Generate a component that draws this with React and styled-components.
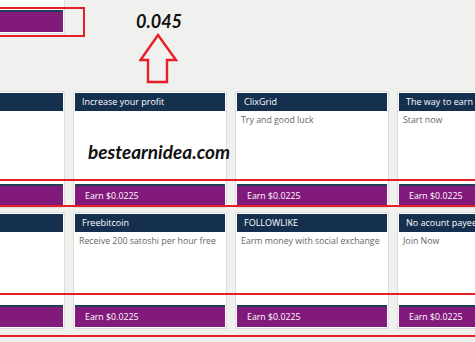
import React from 'react';
import styled, { createGlobalStyle } from 'styled-components';

const GlobalStyle = createGlobalStyle`
  html, body {
    margin: 0;
    padding: 0;
    background: #f0f0ee;
    overflow: hidden;
  }
  body {
    width: 475px;
    height: 342px;
    font-family: "Open Sans", "Noto Sans", sans-serif;
  }
`;

const rows = [
  [
    { title: 'Bitcoin investment', text: '' },
    { title: 'Increase your profit', text: '' },
    { title: 'ClixGrid', text: 'Try and good luck' },
    { title: 'The way to earn', text: 'Start now' },
  ],
  [
    { title: '', text: '' },
    { title: 'Freebitcoin', text: 'Receive 200 satoshi per hour free' },
    { title: 'FOLLOWLIKE', text: 'Earm money with social exchange' },
    { title: 'No acount payeer', text: 'Join Now' },
  ],
];

const Page = styled.div`
  width: 475px;
  height: 342px;
  overflow: hidden;
  position: relative;
`;

const Top = styled.div`
  display: grid;
  grid-template-columns: 154px 154px;
  column-gap: 8px;
  margin-left: -89px;
  height: 91px;
`;

const Stub = styled.div`
  height: 32px;
  background: #fff;
  border: 1px solid #dcdcdc;
  border-top: none;
  padding: 0 1px 1px;
  display: flex;
  flex-direction: column;
  justify-content: flex-end;
`;

const Score = styled.div`
  display: flex;
  flex-direction: column;
  align-items: center;
  gap: 2px;
  padding-top: 11px;
  width: 60px;
  margin-left: 56px;
`;

const Amount = styled.div`
  font-family: Lato, "Liberation Sans", sans-serif;
  font-weight: 700;
  font-style: italic;
  font-size: 18px;
  line-height: 20px;
  color: #111;
`;

const Grid = styled.div`
  display: grid;
  grid-template-columns: repeat(4, 154px);
  column-gap: 8px;
  margin-left: -89px;
`;

const Row = styled.div`
  display: contents;
`;

const Card = styled.div`
  height: 117px;
  margin-bottom: 4px;
  box-sizing: border-box;
  background: #fff;
  border: 1px solid #dcdcdc;
  border-radius: 2px;
  padding: 1px;
  display: flex;
  flex-direction: column;
`;

const Header = styled.div`
  height: 18px;
  background: #152f4e;
  color: #fff;
  font-size: 9px;
  line-height: 18px;
  padding: 0 7px;
  white-space: nowrap;
  overflow: hidden;
`;

const Body = styled.div`
  flex: 1;
  padding: 3px 4px;
  color: #666;
  font-size: 8.8px;
  line-height: 13px;
  white-space: nowrap;
`;

const Footer = styled.div`
  height: 20px;
  border-top: 2px solid #1f3d55;
  background: #821a7c;
  color: #fff;
  font-size: 8.8px;
  line-height: 20px;
  padding: 0 10px;
`;

const Highlight = styled.div`
  position: absolute;
  left: ${(p) => p.$left}px;
  width: ${(p) => p.$width}px;
  top: ${(p) => p.$top}px;
  height: ${(p) => p.$height}px;
  border: 2.5px solid #e61e28;
  box-sizing: border-box;
  pointer-events: none;
`;

const Watermark = styled.div`
  position: absolute;
  left: 88px;
  top: 140px;
  font-family: Lato, "Liberation Sans", sans-serif;
  font-weight: 700;
  font-style: italic;
  font-size: 19px;
  color: #111;
  text-shadow: 0 0 2px #fff;
`;

const Arrow = () => (
  <svg width="40" height="51" viewBox="0 0 40 51">
    <path
      d="M19 2 L37 27 L28 27 L28 49 L9 49 L9 27 L1.5 27 Z"
      fill="none"
      stroke="#e61e28"
      strokeWidth="2.4"
      strokeLinejoin="miter"
    />
  </svg>
);

export default function App() {
  return (
    <Page>
      <GlobalStyle />
      <Top>
        <Stub>
          <Footer />
        </Stub>
        <Score>
          <Amount>0.045</Amount>
          <Arrow />
        </Score>
      </Top>
      <Highlight $left={-20} $width={105} $top={7} $height={30} />
      <Grid>
        {rows.map((row, i) => (
          <Row key={i}>
            {row.map((c, j) => (
              <Card key={j}>
                <Header>{c.title}</Header>
                <Body>{c.text}</Body>
                <Footer>Earn $0.0225</Footer>
              </Card>
            ))}
          </Row>
        ))}
      </Grid>
      <Highlight $left={-20} $width={520} $top={179} $height={28} />
      <Highlight $left={-20} $width={520} $top={293} $height={44} />
      <Watermark>bestearnidea.com</Watermark>
    </Page>
  );
}
